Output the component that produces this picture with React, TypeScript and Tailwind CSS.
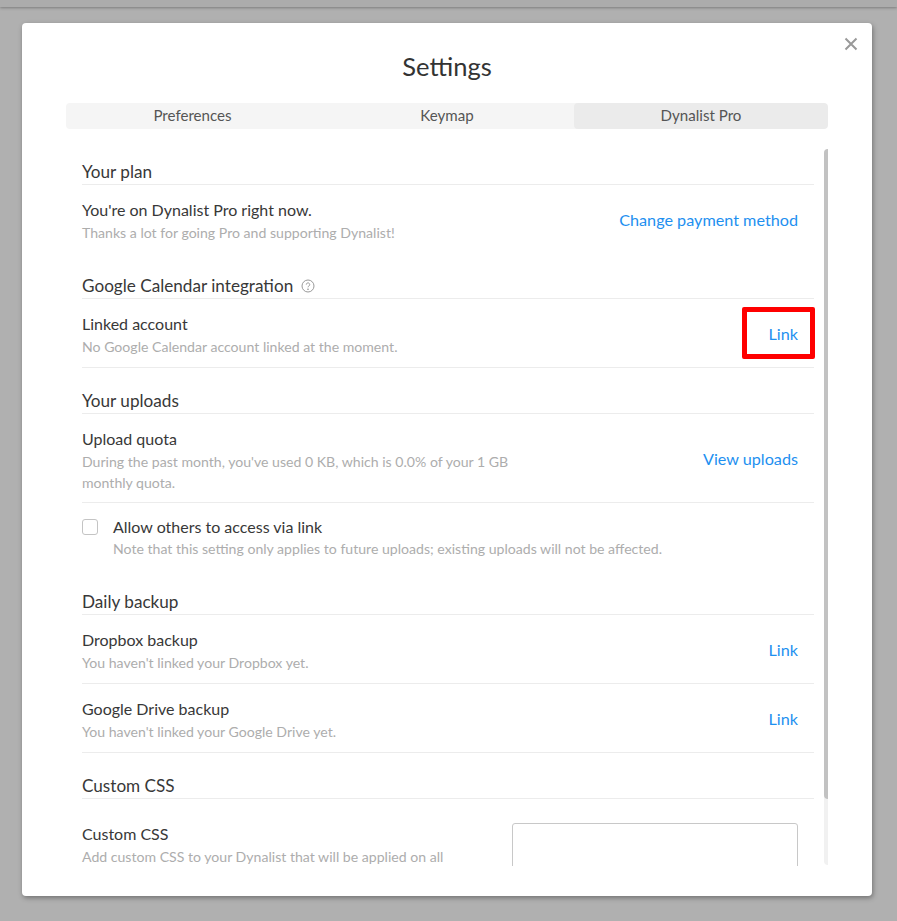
import React from "react";

function Header({ children, top = 0 }: { children: React.ReactNode; top?: number }) {
  return (
    <div className="pt-[12px] pb-[1px] border-b border-[#ececec] text-[17.15px] leading-[22px] text-[#383838] flex items-center" style={{ marginTop: top }}>
      {children}
    </div>
  );
}

function Row({ title, sub, link, border = true, pb = 10 }: { title: string; sub: React.ReactNode; link?: string; border?: boolean; pb?: number }) {
  return (
    <div className={`flex items-center justify-between pt-[14px] pr-4 ${border ? "border-b border-[#ececec]" : ""}`} style={{ paddingBottom: pb }}>
      <div className="w-[430px] shrink-0">
        <div className="text-[16px] leading-[22px] text-[#383838]">{title}</div>
        <div className="text-[14.1px] leading-[21px] text-[#adadad] mt-[1px]">{sub}</div>
      </div>
      {link && <a className="text-[16.2px] leading-[22px] text-[#1e90f0] whitespace-nowrap mb-[3px]">{link}</a>}
    </div>
  );
}

export default function App() {
  return (
    <div className="relative w-[897px] h-[921px] overflow-hidden bg-[#b0b0b0] font-['Lato','Open_Sans',sans-serif] pt-[23px]">
      <div className="absolute top-0 left-0 right-0 h-[7px] bg-[#acacac] shadow-[0_1px_3px_rgba(0,0,0,0.3)]" />
      <div className="relative ml-[22px] w-[850px] h-[873px] bg-white rounded-[4px] shadow-[1px_2px_5px_rgba(0,0,0,0.35)] px-[44px] overflow-hidden">
        <button className="absolute top-[13px] right-[13px] text-[#999999]">
          <svg width="16" height="16" viewBox="0 0 16 16" fill="none" stroke="currentColor" strokeWidth="2">
            <path d="M2.5 2.5 13.5 13.5M13.5 2.5 2.5 13.5" />
          </svg>
        </button>
        <h1 className="pt-[25px] pb-[1px] text-center text-[25.5px] leading-[36px] text-[#333333] font-normal">Settings</h1>
        <div className="mt-[18px] grid grid-cols-3 h-[26px] rounded-[4px] bg-[#f5f5f5] text-[15.1px] leading-[25px] text-[#555555] text-center overflow-hidden">
          <div className="pr-[1px]">Preferences</div>
          <div>Keymap</div>
          <div className="bg-[#ebebeb] rounded-[4px]">Dynalist Pro</div>
        </div>
        <div className="relative mt-[20px] h-[717px] overflow-hidden">
          <div className="pl-4 w-[748px]">
            <Header>Your plan</Header>
            <Row title="You're on Dynalist Pro right now." sub="Thanks a lot for going Pro and supporting Dynalist!" link="Change payment method" border={false} pb={20} />
            <Header>
              Google Calendar integration
              <svg className="ml-[8px]" width="14" height="14" viewBox="0 0 14 14" fill="none" stroke="#999999">
                <circle cx="7" cy="7" r="6" />
                <path d="M5.3 5.6a1.7 1.7 0 1 1 2.6 1.4c-.6.4-.9.7-.9 1.3" strokeWidth="1" />
                <circle cx="7" cy="10.2" r=".4" fill="#999999" />
              </svg>
            </Header>
            <Row title="Linked account" sub="No Google Calendar account linked at the moment." link="Link" />
            <Header top={10}>Your uploads</Header>
            <Row
              title="Upload quota"
              sub={<>During the past month, you've used 0 KB, which is 0.0% of your 1 GB monthly quota.</>}
              link="View uploads"
              pb={9}
            />
            <div className="flex pt-[13px]">
              <div className="mt-[3px] w-4 h-4 border border-[#c4c4c4] rounded-[3px] shrink-0" />
              <div className="ml-[15px]">
                <div className="text-[16px] leading-[22px] text-[#383838]">Allow others to access via link</div>
                <div className="text-[14.1px] leading-[22px] text-[#adadad]">Note that this setting only applies to future uploads; existing uploads will not be affected.</div>
              </div>
            </div>
            <Header top={19}>Daily backup</Header>
            <Row title="Dropbox backup" sub="You haven't linked your Dropbox yet." link="Link" />
            <Row title="Google Drive backup" sub="You haven't linked your Google Drive yet." link="Link" />
            <Header top={10}>Custom CSS</Header>
            <div className="flex justify-between pr-4">
              <div className="w-[400px] pt-[24px]">
                <div className="text-[16px] leading-[22px] text-[#383838]">Custom CSS</div>
                <div className="text-[14.1px] leading-[22px] text-[#adadad] mt-[1px]">Add custom CSS to your Dynalist that will be applied on all devices.</div>
              </div>
              <div className="mt-[24px] w-[286px] h-[120px] border border-[#c8c8c8] rounded-[3px]" />
            </div>
          </div>
          <div className="absolute left-[758px] top-0 w-2 h-[716px] rounded-[4px] bg-[#f1f1f1]">
            <div className="w-2 h-[650px] rounded-[4px] bg-[#c2c2c2]" />
          </div>
        </div>
      </div>
      <div className="absolute left-[742px] top-[307px] w-[73px] h-[52px] border-[5px] border-[#ff0000] rounded-[2px]" />
    </div>
  );
}
